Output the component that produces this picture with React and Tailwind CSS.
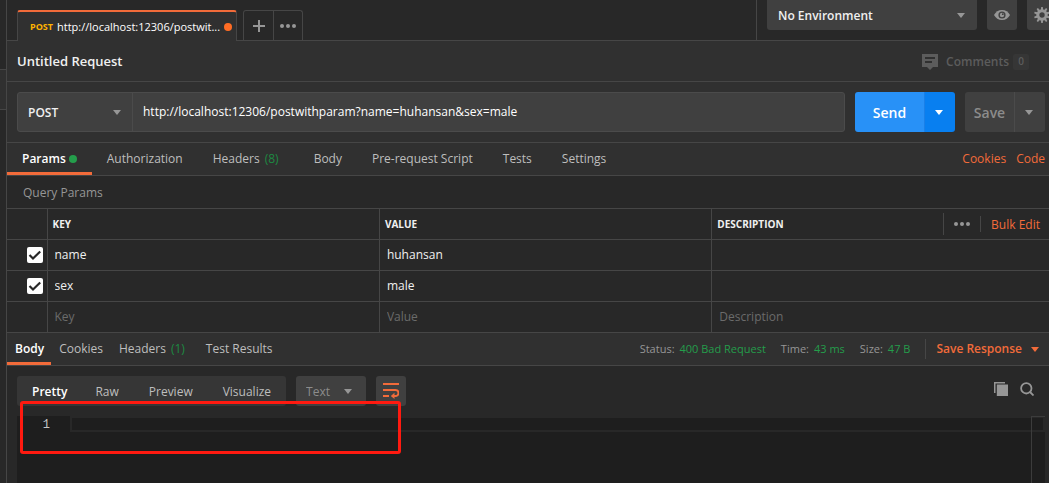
import React from "react";

function Caret({ className }) {
  return (
    <svg viewBox="0 0 8 5" className={`h-[5px] w-2 shrink-0 ${className}`} fill="currentColor" aria-hidden="true">
      <path d="M0 0h8L4 5z" />
    </svg>
  );
}

function Dots() {
  return (
    <svg viewBox="0 0 16 4" className="h-1 w-4 text-[#969696]" fill="currentColor" aria-hidden="true">
      <circle cx="2" cy="2" r="2" />
      <circle cx="8" cy="2" r="2" />
      <circle cx="14" cy="2" r="2" />
    </svg>
  );
}

function Eye() {
  return (
    <svg viewBox="0 0 16 10" className="h-[10px] w-4" aria-hidden="true">
      <path d="M0 5C1.6 1.9 4.500 0 8 0s6.400 1.900 8 5c-1.600 3.100-4.500 5-8 5S1.600 8.100 0 5z" fill="#969696" />
      <circle cx="8" cy="5" r="3.600" fill="#404040" />
      <circle cx="8" cy="5" r="2.200" fill="#969696" />
      <circle cx="8.800" cy="4.200" r="0.900" fill="#404040" />
    </svg>
  );
}

function Gear() {
  const teeth = [0, 36, 72, 108, 144, 180, 216, 252, 288, 324];
  return (
    <svg viewBox="0 0 16 16" className="size-4 text-[#969696]" aria-hidden="true">
      {teeth.map((a) => (
        <path key={a} d="M6.800 3L7.200 0h1.600l.4 3z" fill="currentColor" transform={`rotate(${a} 8 8)`} />
      ))}
      <circle cx="8" cy="8" r="4.200" fill="none" stroke="currentColor" strokeWidth="3" />
    </svg>
  );
}

function CommentIcon() {
  return (
    <svg viewBox="0 0 16 16" className="size-4" aria-hidden="true">
      <path d="M0 0h16v13h-5l-3 3-3-3H0z" fill="#5c5c5c" />
      <path d="M3 4h10M3 8h7" stroke="#303030" strokeWidth="2" />
    </svg>
  );
}

function Check() {
  return (
    <svg viewBox="0 0 16 16" className="pointer-events-none absolute inset-0 size-4" fill="none" aria-hidden="true">
      <path d="M2.500 8l3.500 3.500L13.200 4.500" stroke="#282828" strokeWidth="2.200" />
    </svg>
  );
}

function WrapIcon() {
  return (
    <svg viewBox="0 0 16 16" className="size-4" fill="none" stroke="#f26b3a" strokeWidth="2" aria-hidden="true">
      <path d="M0 1h16M0 7h12.500a2.800 2.800 0 0 1 0 6H10M0 13h6" />
      <path d="M11.500 9.800L7.800 13l3.700 3z" fill="#f26b3a" stroke="none" />
    </svg>
  );
}

function CopyIcon() {
  return (
    <svg viewBox="0 0 14 14" className="size-[14px]" aria-hidden="true">
      <path d="M.75 11V.75H11" fill="none" stroke="#969696" strokeWidth="1.500" />
      <path d="M2.800 2.500H14V14H2.800z" fill="#969696" />
    </svg>
  );
}

function SearchIcon() {
  return (
    <svg viewBox="0 0 14 14" className="size-[14px]" fill="none" stroke="#969696" strokeWidth="1.800" aria-hidden="true">
      <circle cx="6.300" cy="6.300" r="5.200" />
      <path d="M10 10l3.500 3.500" />
    </svg>
  );
}

function TopBar() {
  return (
    <header className="flex h-[41px] justify-between border-b border-[#464646] bg-[#282828]">
      <div className="flex items-end pl-[10px]">
        <div className="-mb-px flex h-[31px] w-[220px] items-center gap-1 rounded-t-[3px] border-x border-t-2 border-x-[#464646] border-t-[#f26b3a] bg-[#303030] pr-[5px] pl-3">
          <span className="text-[9px] font-bold text-[#ffb400]">POST</span>
          <span className="flex-1 pt-0.5 text-[11px] whitespace-nowrap text-white">http://localhost:12306/postwit...</span>
          <span className="size-2 shrink-0 rounded-full bg-[#ff6c24]" />
        </div>
        <div className="ml-[6px] flex h-[30px] rounded-t-[3px] border border-b-0 border-[#464646]">
          <button type="button" aria-label="New tab" className="flex w-[30px] items-center justify-center border-r border-[#464646]">
            <svg viewBox="0 0 12 12" className="size-3" aria-hidden="true">
              <path d="M6 0v12M0 6h12" stroke="#969696" strokeWidth="2" />
            </svg>
          </button>
          <button type="button" aria-label="Tab options" className="flex w-7 items-center justify-center">
            <Dots />
          </button>
        </div>
      </div>
      <div className="flex w-[293px] shrink-0 gap-[10px] overflow-hidden border-l border-[#464646] pl-[10px]">
        <label className="relative block h-[30px] w-[210px] shrink-0">
          <select aria-label="Environment" className="h-[30px] w-full appearance-none rounded-b-[3px] bg-[#404040] px-[11px] pt-0.5 font-semibold text-[#f0f0f0]">
            <option>No Environment</option>
          </select>
          <Caret className="pointer-events-none absolute top-[13px] right-3 text-[#969696]" />
        </label>
        <button type="button" aria-label="Environment quick look" className="flex h-[30px] w-[30px] shrink-0 items-center justify-center rounded-b-[3px] bg-[#404040]">
          <Eye />
        </button>
        <button type="button" aria-label="Manage environments" className="flex h-[30px] w-[30px] shrink-0 items-center justify-center rounded-b-[3px] bg-[#404040]">
          <Gear />
        </button>
      </div>
    </header>
  );
}

function RequestLine() {
  return (
    <form className="flex gap-[10px] border-b border-[#464646] py-[10px] pr-1 pl-[10px]" onSubmit={(e) => e.preventDefault()}>
      <div className="flex h-10 min-w-0 flex-1 rounded-[3px] border border-[#4b4b4b] bg-[#404040]">
        <label className="relative flex w-[115px] shrink-0 border-r border-[#4b4b4b]">
          <select aria-label="Method" className="w-full appearance-none px-[10px] pt-0.5 font-semibold text-[#f0f0f0]">
            <option>POST</option>
          </select>
          <Caret className="pointer-events-none absolute top-[17px] right-[11px] text-[#969696]" />
        </label>
        <input aria-label="Request URL" className="min-w-0 flex-1 px-[10px] text-white outline-none" defaultValue="http://localhost:12306/postwithparam?name=huhansan&sex=male" />
      </div>
      <div className="flex h-10 overflow-hidden rounded-[3px] text-sm font-semibold text-white">
        <button type="submit" className="w-[69px] bg-[#2891f7] pt-0.5">Send</button>
        <button type="button" aria-label="Send options" className="flex w-[31px] items-center justify-center border-l border-[#1a80e8] bg-[#087ff0] pr-0.5">
          <Caret className="text-white" />
        </button>
      </div>
      <div className="flex h-10 overflow-hidden rounded-[3px] bg-[#404040] text-sm font-semibold text-[#8c8c8c]">
        <button type="button" className="w-[49px] pt-0.5">Save</button>
        <button type="button" aria-label="Save options" className="flex w-[31px] items-center justify-center border-l border-[#4b4b4b] pr-0.5">
          <Caret className="text-[#969696]" />
        </button>
      </div>
    </form>
  );
}

const requestTabs = [
  { label: "Authorization" },
  { label: "Headers", count: "(8)" },
  { label: "Body" },
  { label: "Pre-request Script" },
  { label: "Tests" },
  { label: "Settings" },
];

function RequestTabs() {
  return (
    <nav className="flex h-[33px] border-b border-[#464646]">
      <button type="button" className="flex items-center gap-[3px] border-b-[3px] border-[#f26b3a] px-[15px] pt-[3px] font-semibold text-white">
        Params
        <span className="size-2 rounded-full bg-[#249d4b]" />
      </button>
      {requestTabs.map((t) => (
        <button key={t.label} type="button" className="flex items-center gap-[5px] px-[15px]">
          {t.label}
          {t.count && <span className="pr-[5px] text-[#1d8a42]">{t.count}</span>}
        </button>
      ))}
      <div className="ml-auto flex items-center gap-[10px] pr-1 text-[#f26b3a]">
        <a href="#cookies">Cookies</a>
        <a href="#code">Code</a>
      </div>
    </nav>
  );
}

const rows = [
  { key: "name", value: "huhansan", on: true },
  { key: "sex", value: "male", on: true },
  { key: "", value: "", on: false },
];

const cellInput = "block h-[30px] w-full px-[7px] pb-0.5 text-[#f0f0f0] outline-none placeholder:text-[#6b6b6b]";

function ParamsTable() {
  return (
    <section className="bg-[#282828]">
      <h2 className="flex h-8 items-center px-4 pt-0.5 text-[#969696]">Query Params</h2>
      <table className="w-full table-fixed border-collapse">
        <thead>
          <tr className="h-[31px] border-y border-[#464646] text-left text-[10px] text-[#f0f0f0]">
            <th className="w-10 border-r border-[#464646]" aria-label="Enabled" />
            <th className="w-[31.9%] border-r border-[#464646] px-[5px] pt-0.5 font-bold">KEY</th>
            <th className="w-[31.9%] border-r border-[#464646] px-[5px] pt-0.5 font-bold">VALUE</th>
            <th className="px-[5px] font-bold">
              <div className="flex items-center justify-between">
                <span className="pt-0.5">DESCRIPTION</span>
                <div className="flex items-center pr-1 text-xs font-normal">
                  <button type="button" aria-label="Column options" className="flex h-[22px] w-[37px] items-center justify-center border-l border-[#464646]">
                    <Dots />
                  </button>
                  <button type="button" className="h-4 border-l border-[#464646] pt-px pl-[10px] leading-4 text-[#f26b3a]">Bulk Edit</button>
                </div>
              </div>
            </th>
          </tr>
        </thead>
        <tbody>
          {rows.map((r, i) => (
            <tr key={i} className="h-[31px] border-b border-[#464646]">
              <td className="border-r border-[#464646]">
                {r.on && (
                  <label className="relative ml-5 block size-4">
                    <input type="checkbox" defaultChecked aria-label={`Enable ${r.key}`} className="block size-4 appearance-none rounded-[2px] bg-white" />
                    <Check />
                  </label>
                )}
              </td>
              <td className="border-r border-[#464646]">
                <input aria-label={`Key ${i + 1}`} placeholder={r.on ? "" : "Key"} defaultValue={r.key} className={cellInput} />
              </td>
              <td className="border-r border-[#464646]">
                <input aria-label={`Value ${i + 1}`} placeholder={r.on ? "" : "Value"} defaultValue={r.value} className={cellInput} />
              </td>
              <td>
                <input aria-label={`Description ${i + 1}`} placeholder={r.on ? "" : "Description"} className={cellInput} />
              </td>
            </tr>
          ))}
        </tbody>
      </table>
    </section>
  );
}

function Stat({ label, value }) {
  return (
    <span className="flex gap-[5px] text-[#969696]">
      {label} <span className="text-[#249d4b]">{value}</span>
    </span>
  );
}

function ResponseTabs() {
  return (
    <nav className="flex h-[33px] border-b border-[#464646]">
      <button type="button" className="border-b-[3px] border-[#f26b3a] pt-[3px] pr-[7px] pl-2 font-semibold text-white">Body</button>
      <button type="button" className="px-2">Cookies</button>
      <button type="button" className="flex items-center gap-[5px] px-2">
        Headers <span className="pr-[5px] text-[#1d8a42]">(1)</span>
      </button>
      <button type="button" className="px-2">Test Results</button>
      <div className="ml-auto flex items-center gap-[15px] text-[11px]">
        <Stat label="Status:" value="400 Bad Request" />
        <Stat label="Time:" value="43 ms" />
        <Stat label="Size:" value="47 B" />
        <button type="button" className="flex h-5 items-center gap-[9px] border-l border-[#464646] pr-[10px] pl-[10px] text-xs font-semibold text-[#f26b3a]">
          Save Response
          <Caret className="text-[#f26b3a]" />
        </button>
      </div>
    </nav>
  );
}

function ResponseBody() {
  return (
    <section className="relative flex flex-1 flex-col bg-[#282828] pt-[10px] pr-1 pl-[10px]">
      <div className="flex h-[30px] items-stretch gap-[10px]">
        <div className="flex rounded-[3px] bg-[#363636] pt-0.5">
          <button type="button" className="pr-[13px] pl-[15px] font-semibold text-white">Pretty</button>
          <button type="button" className="px-[15px]">Raw</button>
          <button type="button" className="px-[15px]">Preview</button>
          <button type="button" className="px-[15px]">Visualize</button>
        </div>
        <label className="relative block w-[70px]">
          <select aria-label="Response format" className="h-full w-full appearance-none rounded-[3px] bg-[#404040] px-[10px] pt-0.5 text-[#8c8c8c]">
            <option>Text</option>
          </select>
          <Caret className="pointer-events-none absolute top-[13px] right-[14px] text-[#969696]" />
        </label>
        <button type="button" aria-label="Wrap lines" className="flex w-[30px] items-center justify-center rounded-[3px] bg-[#404040]">
          <WrapIcon />
        </button>
        <div className="ml-auto flex items-center gap-3 pr-[11px] pb-1">
          <button type="button" aria-label="Copy response"><CopyIcon /></button>
          <button type="button" aria-label="Search response"><SearchIcon /></button>
        </div>
      </div>
      <div className="mt-[10px] flex min-h-[67px] flex-1 bg-[#1e1e1e]">
        <div className="w-[53px] pr-5 text-right font-['Liberation_Mono',monospace] leading-[18px] text-[#c6c6c6]">1</div>
        <div className="h-4 flex-1 border-2 border-r-0 border-[#282828]" />
        <div className="w-[14px] border-t border-l border-[#3c3c3c]">
          <div className="h-[15px] border-y border-r-2 border-b-2 border-[#282828]" />
        </div>
      </div>
      <div className="pointer-events-none absolute top-[35px] left-[13px] h-[53px] w-[381px] rounded-[3px] border-3 border-[#ff1a10]" />
    </section>
  );
}

export default function App() {
  return (
    <div className="flex min-h-screen bg-[#303030] font-['Open_Sans',sans-serif] text-xs text-[#bebebe]">
      <aside className="w-[7px] shrink-0 border-r border-[#464646] bg-[#282828]">
        <div className="h-[69px]" />
        <div className="h-[41px] border-y border-[#464646] bg-[#303030]" />
      </aside>
      <main className="flex min-w-0 flex-1 flex-col">
        <TopBar />
        <div className="flex h-[41px] items-center justify-between border-b border-[#464646] pt-0.5 pr-5 pl-[10px]">
          <h1 className="text-[13px] font-semibold text-[#f0f0f0]">Untitled Request</h1>
          <button type="button" className="flex items-center font-semibold text-[#5c5c5c]">
            <CommentIcon />
            <span className="ml-2">Comments</span>
            <span className="ml-1 flex h-4 w-4 items-center justify-center rounded-[2px] bg-[#363636] text-[10px]">0</span>
          </button>
        </div>
        <RequestLine />
        <RequestTabs />
        <ParamsTable />
        <ResponseTabs />
        <ResponseBody />
      </main>
    </div>
  );
}
